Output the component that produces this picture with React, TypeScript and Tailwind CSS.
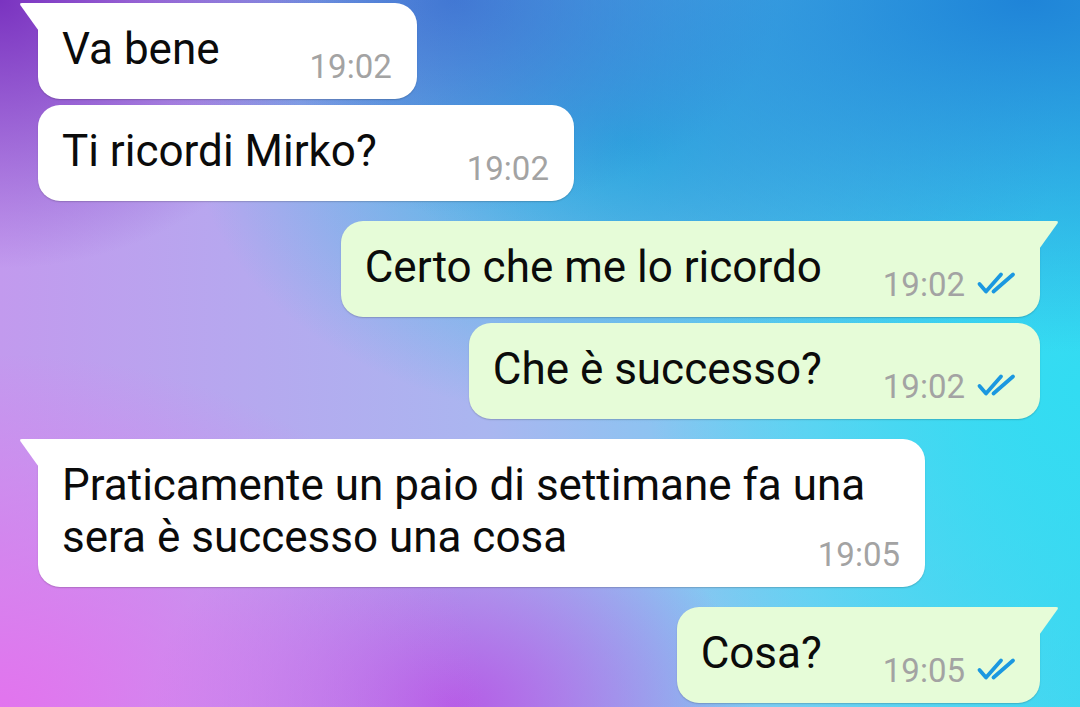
import React from "react";

type Msg = {
  side: "in" | "out";
  tail: boolean;
  text: string;
  time: string;
  gapTop: "none" | "same" | "change";
};

const messages: Msg[] = [
  { side: "in", tail: true, text: "Va bene", time: "19:02", gapTop: "none" },
  { side: "in", tail: false, text: "Ti ricordi Mirko?", time: "19:02", gapTop: "same" },
  { side: "out", tail: true, text: "Certo che me lo ricordo", time: "19:02", gapTop: "change" },
  { side: "out", tail: false, text: "Che è successo?", time: "19:02", gapTop: "same" },
  {
    side: "in",
    tail: true,
    text: "Praticamente un paio di settimane fa una sera è successo una cosa",
    time: "19:05",
    gapTop: "change",
  },
  { side: "out", tail: true, text: "Cosa?", time: "19:05", gapTop: "change" },
];

function DoubleCheck() {
  return (
    <svg width="42" height="25" viewBox="0 0 42 25" fill="none" className="mb-[5px] ml-[11px]">
      <path
        d="M3.5 13 L10 20.5 L25 3.5"
        stroke="#1b98e0"
        strokeWidth="3.8"
        strokeLinecap="round"
        strokeLinejoin="round"
      />
      <path
        d="M17.5 20.5 L37 3.5"
        stroke="#1b98e0"
        strokeWidth="3.8"
        strokeLinecap="round"
        strokeLinejoin="round"
      />
    </svg>
  );
}

function Tail({ side, color }: { side: "in" | "out"; color: string }) {
  if (side === "in") {
    return (
      <svg
        width="22"
        height="32"
        viewBox="0 0 22 32"
        className="absolute left-[-19px] top-0"
      >
        <path d="M22 0 L3 0 Q0 0 1.6 2.4 L22 31 Z" fill={color} />
      </svg>
    );
  }
  return (
    <svg
      width="22"
      height="32"
      viewBox="0 0 22 32"
      className="absolute right-[-19px] top-0"
    >
      <path d="M0 0 L19 0 Q22 0 20.4 2.4 L0 31 Z" fill={color} />
    </svg>
  );
}

function Bubble({ m }: { m: Msg }) {
  const isIn = m.side === "in";
  const color = isIn ? "#ffffff" : "#e6fcd8";
  return (
    <div
      className={
        "flex " +
        (isIn ? "justify-start" : "justify-end") +
        (m.gapTop === "same" ? " mt-[6px]" : m.gapTop === "change" ? " mt-[20px]" : "")
      }
    >
      <div
        className={
          "relative pt-5 pb-4 pl-6 max-w-[887px] rounded-[22px] shadow-[0_1px_1.5px_rgba(0,0,0,0.18)] " +
          (isIn ? "bg-white pr-[25px] " : "bg-[#e6fcd8] pr-[22px] ") +
          (m.tail ? (isIn ? "rounded-tl-none" : "rounded-tr-none") : "")
        }
      >
        {m.tail && <Tail side={m.side} color={color} />}
        <p className="flow-root text-[44px] leading-[52px] text-[#0b0b0b]">
          {m.text}
          <span
            className={
              "float-right flex items-end h-[33px] mt-[27px] " +
              (isIn ? "ml-[90px]" : "ml-[61px]")
            }
          >
            <span className="text-[33px] leading-[33px] text-[#a3a3a3]">{m.time}</span>
            {!isIn && <DoubleCheck />}
          </span>
        </p>
      </div>
    </div>
  );
}

export default function App() {
  return (
    <div
      className="w-[1080px] h-[707px] overflow-hidden pt-[3px] pl-[38px] pr-[40px] bg-[radial-gradient(ellipse_30%_38%_at_0%_0%,#7a33c0_0%,rgba(122,51,192,0)_100%),radial-gradient(ellipse_70%_50%_at_95%_0%,#1f84d8_0%,rgba(31,132,216,0)_100%),radial-gradient(ellipse_30%_30%_at_42%_0%,#4d74d2_0%,rgba(77,116,210,0)_100%),radial-gradient(ellipse_40%_40%_at_58%_20%,#34b6e2_0%,rgba(52,182,226,0)_100%),radial-gradient(ellipse_45%_50%_at_0%_100%,#e274ee_0%,rgba(226,116,238,0)_100%),radial-gradient(ellipse_28%_30%_at_42%_100%,#b45ce6_0%,rgba(180,92,230,0)_100%),radial-gradient(ellipse_40%_60%_at_100%_55%,#32dcf2_0%,rgba(50,220,242,0)_100%),linear-gradient(to_right,#c29aee_0%,#aab6f0_45%,#72cff2_75%,#44d6f0_100%)]"
      style={{ fontFamily: "Roboto, 'Noto Sans', sans-serif" }}
    >
      {messages.map((m, i) => (
        <Bubble key={i} m={m} />
      ))}
    </div>
  );
}
